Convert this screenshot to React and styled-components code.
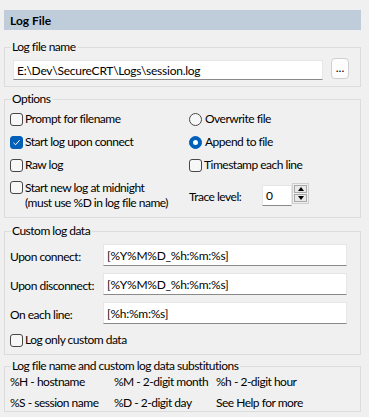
import React from 'react';
import styled, { createGlobalStyle } from 'styled-components';

const Global = createGlobalStyle`
  html, body { margin: 0; padding: 0; background: #f0f0f0; }
  body {
    font-family: Lato, "Noto Sans", "Liberation Sans", sans-serif;
    font-size: 12px;
    letter-spacing: -0.5px;
    color: #000;
  }
  * { box-sizing: border-box; }
`;

const Page = styled.div`
  width: 357px;
  margin-left: 4px;
  padding-top: 10px;
  display: flex;
  flex-direction: column;
`;

const Header = styled.div`
  height: 20px;
  background: #bfcddb;
  font-weight: 700;
  letter-spacing: 0;
  padding-left: 6px;
  display: flex;
  align-items: center;
`;

const Group = styled.fieldset`
  margin: ${(p) => p.$mt}px 0 0 0;
  padding: 0;
  border: 1px solid #dcdcdc;
  min-width: 0;
`;

const Legend = styled.legend`
  margin-left: 6px;
  padding: 0 2px 0 1px;
  line-height: 16px;
  height: 16px;
`;

const FileRow = styled.div`
  display: flex;
  align-items: flex-start;
  gap: 8px;
  padding: 3px 11px 6px 8px;
`;

const TextBox = styled.div`
  flex: ${(p) => (p.$grow ? 1 : 'none')};
  width: ${(p) => (p.$w ? `${p.$w}px` : 'auto')};
  height: ${(p) => p.$h || 22}px;
  margin-top: ${(p) => p.$mt || 0}px;
  background: #fff;
  border: 1px solid #e6e6e6;
  border-bottom-color: #8a8a8a;
  padding: 0 3px;
  letter-spacing: -0.25px;
  display: flex;
  align-items: center;
  white-space: nowrap;
  overflow: hidden;
`;

const BrowseButton = styled.button`
  width: 18px;
  height: 21px;
  padding: 0 0 4px 0;
  border: 1px solid #d0d0d0;
  border-radius: 4px;
  background: #fdfdfd;
  font: inherit;
  font-size: 12px;
  letter-spacing: 0;
  line-height: 1;
  display: flex;
  align-items: flex-end;
  justify-content: center;
  color: #000;
`;

const OptionsGrid = styled.div`
  display: grid;
  grid-template-columns: 179px 1fr;
  grid-template-rows: 16px 16px 16px auto;
  row-gap: 7px;
  padding: 4px 8px 7px 5px;
`;

const Item = styled.div`
  display: flex;
  align-items: flex-start;
  line-height: ${(p) => p.$lh || 16}px;
  white-space: nowrap;
`;

const CheckBox = styled.span`
  flex: none;
  width: 13px;
  height: 13px;
  margin-top: ${(p) => p.$mt ?? 1.5}px;
  margin-right: 2px;
  border-radius: 3px;
  border: 1px solid ${(p) => (p.$checked ? '#005fb8' : '#474747')};
  background: ${(p) => (p.$checked ? '#005fb8' : '#f7f7f7')};
  display: flex;
  align-items: center;
  justify-content: center;
`;

const Radio = styled.span`
  flex: none;
  width: 13px;
  height: 13px;
  margin-top: 1.5px;
  margin-right: 3px;
  border-radius: 50%;
  border: 1px solid ${(p) => (p.$checked ? '#005fb8' : '#474747')};
  background: ${(p) => (p.$checked ? '#005fb8' : '#f7f7f7')};
  display: flex;
  align-items: center;
  justify-content: center;
  &::after {
    content: '';
    display: ${(p) => (p.$checked ? 'block' : 'none')};
    width: 5px;
    height: 5px;
    border-radius: 50%;
    background: #fff;
  }
`;

const Lines = styled.div`
  display: flex;
  flex-direction: column;
`;

const TraceRow = styled.div`
  display: flex;
  align-items: center;
`;

const TraceLabel = styled.span`
  width: 73px;
  padding-top: 2px;
`;

const Spin = styled.div`
  display: flex;
  align-items: flex-start;
`;

const SpinButtons = styled.div`
  width: 17px;
  height: 21px;
  margin-top: -2px;
  border: 1px solid #cfcfcf;
  padding: 1px;
  display: flex;
  flex-direction: column;
  gap: 1px;
  background: #f0f0f0;
`;

const SpinBtn = styled.div`
  flex: 1;
  border: 1px solid #a8a8a8;
  background: #e9e9e9;
  display: flex;
  align-items: center;
  justify-content: center;
  &::after {
    content: '';
    width: 0;
    height: 0;
    border-left: 3.5px solid transparent;
    border-right: 3.5px solid transparent;
    ${(p) =>
      p.$up
        ? 'border-bottom: 4px solid #000;'
        : 'border-top: 4px solid #000;'}
  }
`;

const CustomGrid = styled.div`
  display: grid;
  grid-template-columns: 93px 244px;
  grid-auto-rows: 22px;
  row-gap: 7px;
  align-items: center;
  padding: 5px 13px 0 5px;
`;

const FieldLabel = styled.span`
  white-space: nowrap;
  padding-top: 2px;
`;

const CustomFooter = styled.div`
  padding: 8px 5px 6px 5px;
`;

const SubstGrid = styled.div`
  display: grid;
  grid-template-columns: 104px 102px 1fr;
  grid-auto-rows: 16px;
  row-gap: 5px;
  line-height: 16px;
  padding: 0 5px;
  white-space: nowrap;
`;

const Check = ({ checked, mt }) => (
  <CheckBox $checked={checked} $mt={mt}>
    {checked && (
      <svg width="9" height="9" viewBox="0 0 9 9">
        <path d="M1.5 4.8 L3.6 6.8 L7.6 2.2" fill="none" stroke="#fff" strokeWidth="1" />
      </svg>
    )}
  </CheckBox>
);

export default function App() {
  return (
    <>
      <Global />
      <Page>
        <Header>Log File</Header>

        <Group $mt={9}>
          <Legend>Log file name</Legend>
          <FileRow>
            <TextBox $grow $h={20} $mt={2}>E:\Dev\SecureCRT\Logs\session.log</TextBox>
            <BrowseButton>...</BrowseButton>
          </FileRow>
        </Group>

        <Group $mt={4}>
          <Legend>Options</Legend>
          <OptionsGrid>
            <Item><Check />Prompt for filename</Item>
            <Item><Radio />Overwrite file</Item>
            <Item><Check checked />Start log upon connect</Item>
            <Item><Radio $checked />Append to file</Item>
            <Item><Check />Raw log</Item>
            <Item><Check />Timestamp each line</Item>
            <Item $lh={15}>
              <Check mt={1} />
              <Lines>
                <span>Start new log at midnight</span>
                <span>(must use %D in log file name)</span>
              </Lines>
            </Item>
            <TraceRow>
              <TraceLabel>Trace level:</TraceLabel>
              <Spin>
                <TextBox $w={30} $h={21}>0</TextBox>
                <SpinButtons>
                  <SpinBtn $up />
                  <SpinBtn />
                </SpinButtons>
              </Spin>
            </TraceRow>
          </OptionsGrid>
        </Group>

        <Group $mt={5}>
          <Legend>Custom log data</Legend>
          <CustomGrid>
            <FieldLabel>Upon connect:</FieldLabel>
            <TextBox>[%Y%M%D_%h:%m:%s]</TextBox>
            <FieldLabel>Upon disconnect:</FieldLabel>
            <TextBox>[%Y%M%D_%h:%m:%s]</TextBox>
            <FieldLabel>On each line:</FieldLabel>
            <TextBox>[%h:%m:%s]</TextBox>
          </CustomGrid>
          <CustomFooter>
            <Item><Check />Log only custom data</Item>
          </CustomFooter>
        </Group>

        <Group $mt={3}>
          <Legend>Log file name and custom log data substitutions</Legend>
          <SubstGrid>
            <span>%H - hostname</span>
            <span>%M - 2-digit month</span>
            <span>%h - 2-digit hour</span>
            <span>%S - session name</span>
            <span>%D - 2-digit day</span>
            <span>See Help for more</span>
          </SubstGrid>
        </Group>
      </Page>
    </>
  );
}
